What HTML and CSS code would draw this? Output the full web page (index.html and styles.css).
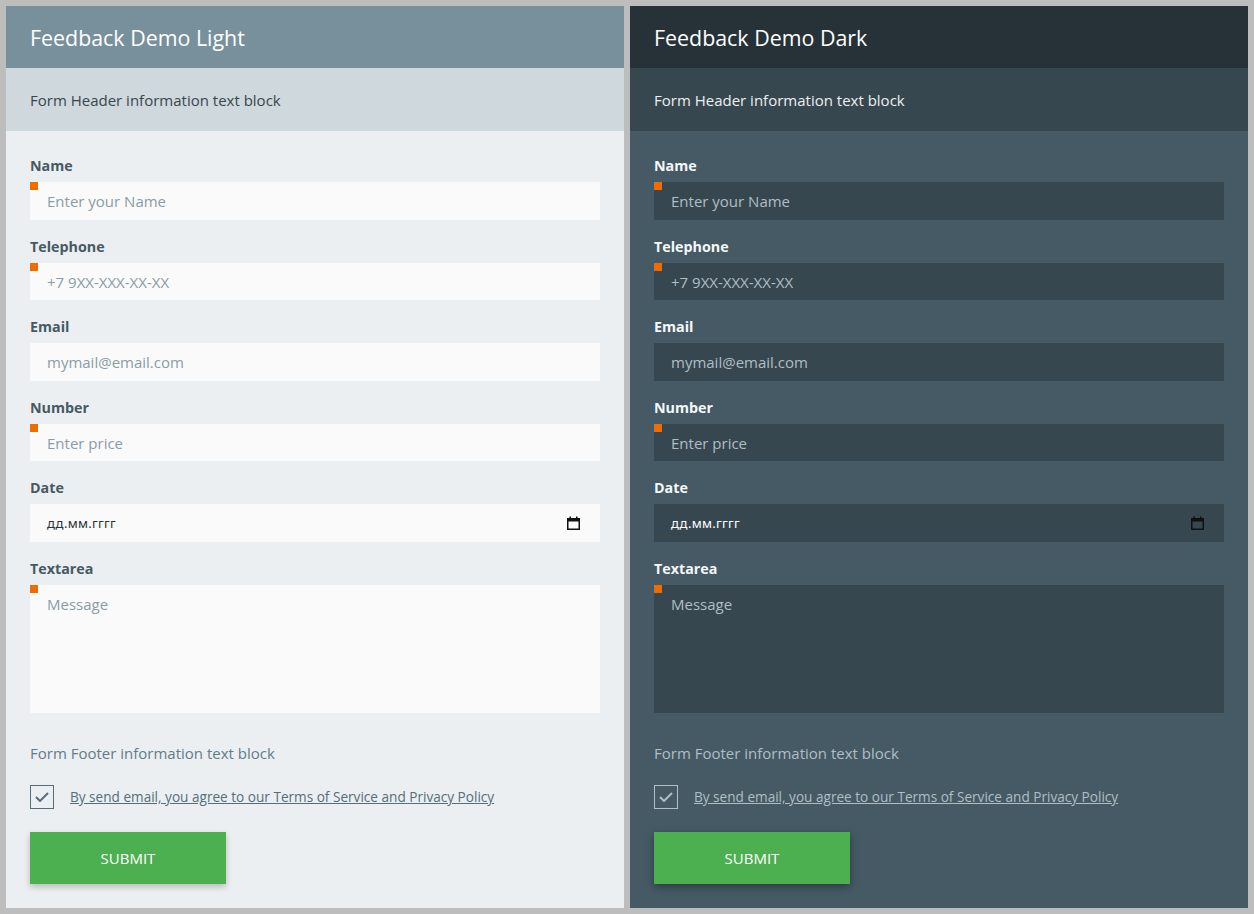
FILE: index.html
```html
<!DOCTYPE html>
<html lang="ru">
<head>
<meta charset="utf-8">
<title>Feedback Demo</title>
<link rel="stylesheet" href="styles.css">
</head>
<body>
<div class="page">
  <section class="panel light">
    <header class="panel-title">Feedback Demo Light</header>
    <div class="panel-sub">Form Header information text block</div>
    <form class="panel-body">
      <div class="field">
        <label class="label">Name</label>
        <div class="input req"><span class="ph">Enter your Name</span></div>
      </div>
      <div class="field">
        <label class="label">Telephone</label>
        <div class="input req"><span class="ph">+7 9XX-XXX-XX-XX</span></div>
      </div>
      <div class="field">
        <label class="label">Email</label>
        <div class="input"><span class="ph">mymail@email.com</span></div>
      </div>
      <div class="field">
        <label class="label">Number</label>
        <div class="input req"><span class="ph">Enter price</span></div>
      </div>
      <div class="field">
        <label class="label">Date</label>
        <div class="input date"><span class="dt">дд.мм.гггг</span>
          <svg class="cal" width="13" height="14" viewBox="0 0 13 14"><rect x="0.75" y="2.75" width="11.5" height="10.5" fill="none" stroke="#111" stroke-width="1.5"/><rect x="0.5" y="2.5" width="12" height="3" fill="#111"/><rect x="2.5" y="0.5" width="1.5" height="3" fill="#111"/><rect x="9" y="0.5" width="1.5" height="3" fill="#111"/></svg>
        </div>
      </div>
      <div class="field">
        <label class="label">Textarea</label>
        <div class="input area req"><span class="ph">Message</span></div>
      </div>
      <p class="footer-text">Form Footer information text block</p>
      <div class="agree">
        <span class="check"><svg width="14" height="10" viewBox="0 0 14 10"><polyline points="1,5 5,9 13,1" fill="none" stroke="currentColor" stroke-width="2"/></svg></span>
        <a class="terms" href="#">By send email, you agree to our Terms of Service and Privacy Policy</a>
      </div>
      <button class="submit" type="button">SUBMIT</button>
    </form>
  </section>
  <section class="panel dark">
    <header class="panel-title">Feedback Demo Dark</header>
    <div class="panel-sub">Form Header information text block</div>
    <form class="panel-body">
      <div class="field">
        <label class="label">Name</label>
        <div class="input req"><span class="ph">Enter your Name</span></div>
      </div>
      <div class="field">
        <label class="label">Telephone</label>
        <div class="input req"><span class="ph">+7 9XX-XXX-XX-XX</span></div>
      </div>
      <div class="field">
        <label class="label">Email</label>
        <div class="input"><span class="ph">mymail@email.com</span></div>
      </div>
      <div class="field">
        <label class="label">Number</label>
        <div class="input req"><span class="ph">Enter price</span></div>
      </div>
      <div class="field">
        <label class="label">Date</label>
        <div class="input date"><span class="dt">дд.мм.гггг</span>
          <svg class="cal" width="13" height="14" viewBox="0 0 13 14"><rect x="0.75" y="2.75" width="11.5" height="10.5" fill="none" stroke="#111" stroke-width="1.5"/><rect x="0.5" y="2.5" width="12" height="3" fill="#111"/><rect x="2.5" y="0.5" width="1.5" height="3" fill="#111"/><rect x="9" y="0.5" width="1.5" height="3" fill="#111"/></svg>
        </div>
      </div>
      <div class="field">
        <label class="label">Textarea</label>
        <div class="input area req"><span class="ph">Message</span></div>
      </div>
      <p class="footer-text">Form Footer information text block</p>
      <div class="agree">
        <span class="check"><svg width="14" height="10" viewBox="0 0 14 10"><polyline points="1,5 5,9 13,1" fill="none" stroke="currentColor" stroke-width="2"/></svg></span>
        <a class="terms" href="#">By send email, you agree to our Terms of Service and Privacy Policy</a>
      </div>
      <button class="submit" type="button">SUBMIT</button>
    </form>
  </section>
</div>
</body>
</html>
```
FILE: styles.css
```css
* { box-sizing: border-box; }
html, body { margin: 0; padding: 0; }
body {
  background: #bdbdbd;
  font-family: "Open Sans", "Noto Sans", sans-serif;
}
.page {
  display: flex;
  gap: 6px;
  padding: 6px;
  height: 914px;
}
.panel {
  flex: 1;
  display: flex;
  flex-direction: column;
}
.panel-title {
  height: 62px;
  display: flex;
  align-items: center;
  padding: 0 24px;
  font-size: 21.4px;
  color: #fff;
}
.panel-sub {
  height: 63px;
  display: flex;
  align-items: center;
  padding: 1px 24px 0;
  font-size: 15px;
}
.panel-body {
  flex: 1;
  margin: 0;
  padding: 24px 24px 0;
  display: flex;
  flex-direction: column;
  align-items: flex-start;
}
.field {
  width: 100%;
  display: flex;
  flex-direction: column;
  margin-bottom: 16px;
}
.label {
  height: 20px;
  line-height: 22px;
  font-size: 14.3px;
  font-weight: 700;
  margin-bottom: 7px;
}
.input {
  position: relative;
  height: 37.5px;
  display: flex;
  align-items: center;
  padding: 1px 17px 0;
  font-size: 15px;
}
.input.req::before {
  content: "";
  position: absolute;
  left: 0;
  top: 0;
  width: 8px;
  height: 8px;
  background: #ef6c00;
}
.input.area {
  height: 128px;
  align-items: flex-start;
  padding-top: 9px;
}
.input.date {
  justify-content: space-between;
  padding-right: 20px;
}
.dt {
  font-size: 13px;
  font-family: "Noto Sans", sans-serif;
  letter-spacing: 0.3px;
}
.cal { display: block; }
.footer-text {
  margin: 14px 0 0;
  height: 20px;
  line-height: 20px;
  font-size: 15px;
}
.agree {
  display: flex;
  align-items: center;
  gap: 16px;
  margin-top: 22px;
}
.check {
  width: 24px;
  height: 24px;
  display: flex;
  align-items: center;
  justify-content: center;
}
.check svg { display: block; }
.terms {
  font-size: 13.6px;
  text-decoration: underline;
}
.submit {
  margin-top: 23px;
  width: 196px;
  height: 52px;
  border: 0;
  background: #4caf50;
  color: #fff;
  font-family: "Open Sans", "Noto Sans", sans-serif;
  font-size: 15px;
  box-shadow: 0 3px 6px rgba(0, 0, 0, 0.22);
  cursor: pointer;
}

/* light theme */
.light .panel-title { background: #78909c; }
.light .panel-sub { background: #cfd8dc; color: #37474f; }
.light .panel-body { background: #eceff1; }
.light .label { color: #455a64; }
.light .input { background: #fafafa; }
.light .ph { color: #8a9ca6; }
.light .dt { color: #263238; }
.light .footer-text { color: #607d8b; }
.light .check { border: 1px solid #546e7a; color: #546e7a; }
.light .terms { color: #546e7a; }

/* dark theme */
.dark .panel-title { background: #263238; }
.dark .panel-sub { background: #37474f; color: #eceff1; }
.dark .panel-body { background: #455a64; }
.dark .label { color: #f5f7f8; }
.dark .input { background: #37474f; }
.dark .ph { color: #b0bec5; }
.dark .dt { color: #ffffff; }
.dark .footer-text { color: #b0bec5; }
.dark .check { border: 1px solid #b0bec5; color: #b0bec5; }
.dark .terms { color: #b0bec5; }
.dark .submit { box-shadow: 0 3px 8px rgba(0, 0, 0, 0.35); }
```
